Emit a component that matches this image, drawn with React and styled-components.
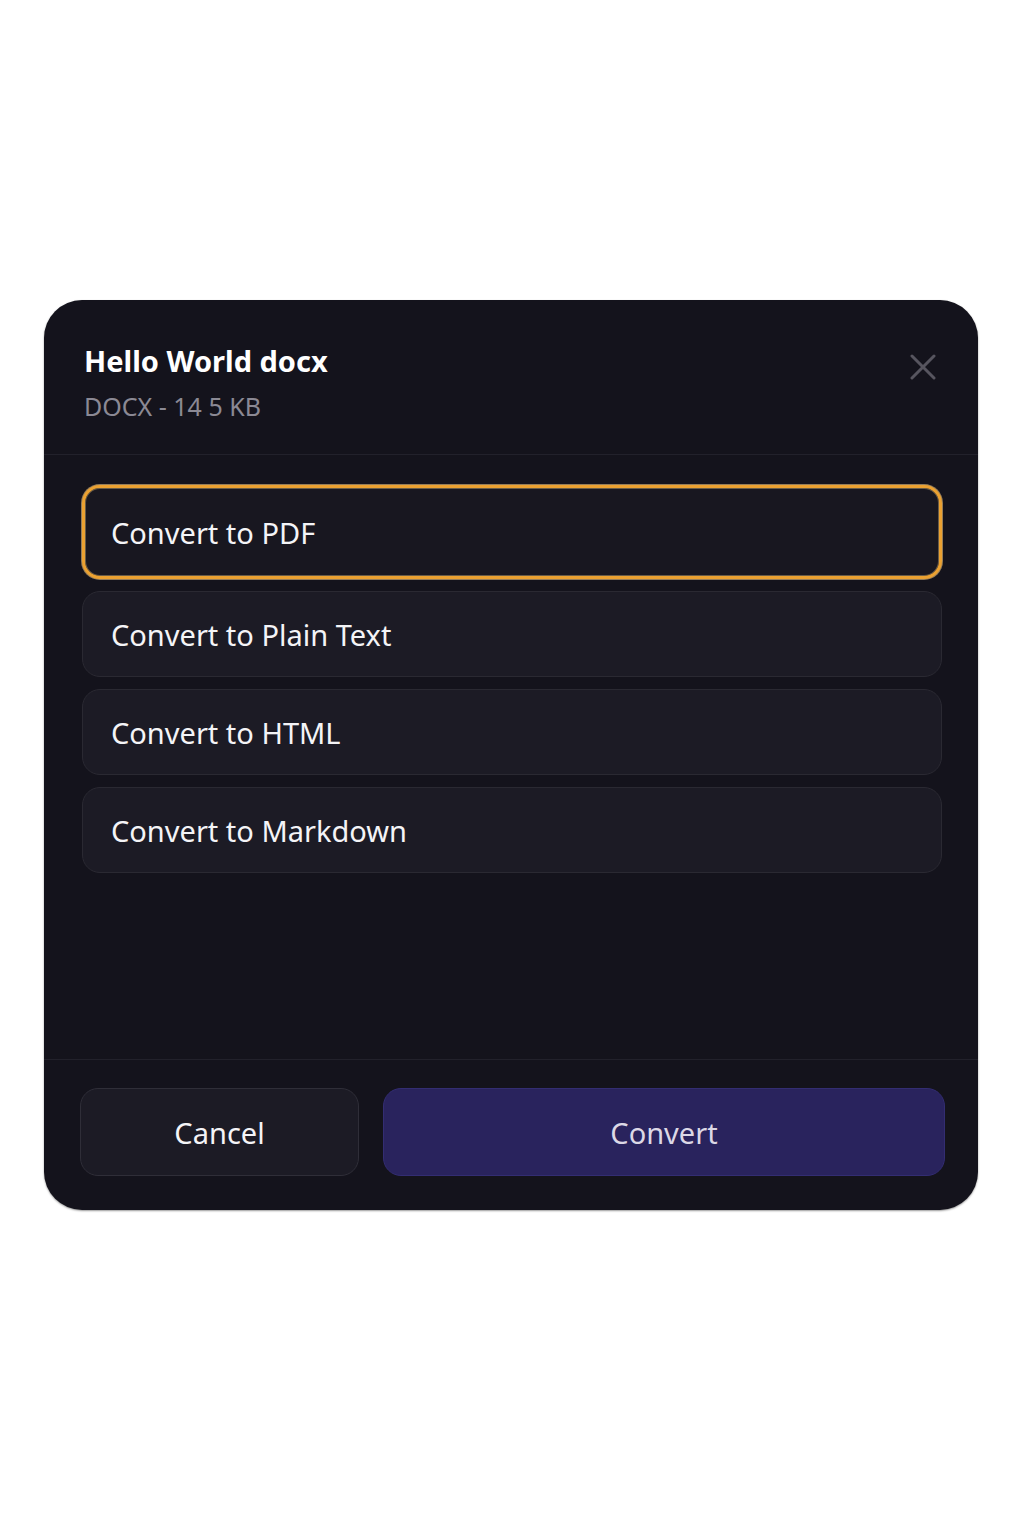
import React, { useState } from 'react';
import styled, { createGlobalStyle } from 'styled-components';

const GlobalStyle = createGlobalStyle`
  html, body {
    margin: 0;
    padding: 0;
    background: #ffffff;
  }
  body {
    font-family: "Noto Sans", "Open Sans", sans-serif;
  }
`;

const Page = styled.div`
  width: 1024px;
  height: 1536px;
  display: flex;
  justify-content: center;
  padding-top: 300px;
  box-sizing: border-box;
`;

const Dialog = styled.div`
  width: 934px;
  height: 910px;
  margin-left: -2px;
  background: #14131c;
  border-radius: 38px;
  display: flex;
  flex-direction: column;
  overflow: hidden;
  box-shadow: 0 1px 2px rgba(0, 0, 0, 0.4);
`;

const Header = styled.div`
  display: flex;
  justify-content: space-between;
  align-items: flex-start;
  padding: 43px 42px 32px 40px;
  border-bottom: 1px solid #22212b;
`;

const Title = styled.h2`
  margin: 0;
  font-size: 29px;
  line-height: 36px;
  font-weight: 700;
  color: #ffffff;
`;

const Meta = styled.div`
  margin-top: 11px;
  font-size: 25px;
  line-height: 32px;
  color: #8b8994;
`;

const CloseButton = styled.button`
  margin-top: 11px;
  padding: 0;
  width: 26px;
  height: 26px;
  border: none;
  background: none;
  color: #57555f;
  cursor: pointer;
  display: flex;
`;

const Body = styled.div`
  flex: 1;
  display: flex;
  flex-direction: column;
  gap: 12px;
  padding: 30px 36px 0 38px;
`;

const Option = styled.button`
  height: ${p => (p.$selected ? 94 : 86)}px;
  flex: none;
  display: flex;
  align-items: center;
  padding: 0 ${p => (p.$selected ? 26 : 28)}px;
  border-radius: 18px;
  background: ${p => (p.$selected ? '#181720' : '#1c1b25')};
  border: ${p => (p.$selected ? '3px solid #eba131' : '1px solid #2a2932')};
  box-shadow: ${p =>
    p.$selected
      ? '0 0 0 1px rgba(255, 214, 140, 0.55), inset 0 0 0 1px rgba(255, 220, 150, 0.35)'
      : 'none'};
  color: #f4f4f7;
  font-family: inherit;
  font-size: 29px;
  text-align: left;
  cursor: pointer;
`;

const Footer = styled.div`
  display: flex;
  gap: 24px;
  padding: 28px 33px 34px 36px;
  border-top: 1px solid #22212b;
`;

const Button = styled.button`
  height: 88px;
  border-radius: 18px;
  font-family: inherit;
  font-size: 29px;
  cursor: pointer;
  width: ${p => (p.$primary ? 'auto' : '279px')};
  flex: ${p => (p.$primary ? 1 : 'none')};
  background: ${p => (p.$primary ? '#29235d' : '#1c1b25')};
  border: 1px solid ${p => (p.$primary ? '#332d72' : '#2f2e38')};
  color: ${p => (p.$primary ? '#dcd8e6' : '#f4f4f7')};
`;

const formats = ['PDF', 'Plain Text', 'HTML', 'Markdown'];

export default function App() {
  const [selected, setSelected] = useState('PDF');

  return (
    <Page>
      <GlobalStyle />
      <Dialog>
        <Header>
          <div>
            <Title>Hello World docx</Title>
            <Meta>DOCX - 14 5 KB</Meta>
          </div>
          <CloseButton aria-label="Close">
            <svg width="26" height="26" viewBox="0 0 26 26" fill="none">
              <path d="M2 2L24 24M24 2L2 24" stroke="currentColor" strokeWidth="3" strokeLinecap="round" />
            </svg>
          </CloseButton>
        </Header>
        <Body>
          {formats.map(f => (
            <Option key={f} $selected={selected === f} onClick={() => setSelected(f)}>
              Convert to {f}
            </Option>
          ))}
        </Body>
        <Footer>
          <Button>Cancel</Button>
          <Button $primary>Convert</Button>
        </Footer>
      </Dialog>
    </Page>
  );
}
